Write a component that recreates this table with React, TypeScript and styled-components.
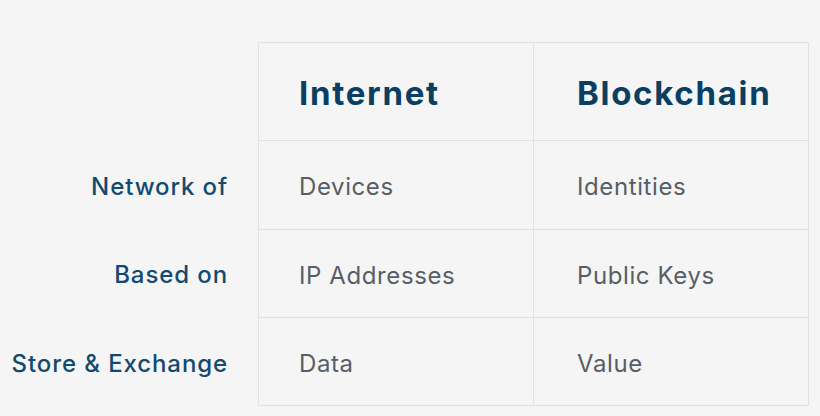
import React from "react"
import styled, { createGlobalStyle } from "styled-components"

const rows = [
  { label: "Network of", internet: "Devices", blockchain: "Identities" },
  { label: "Based on", internet: "IP Addresses", blockchain: "Public Keys" },
  { label: "Store & Exchange", internet: "Data", blockchain: "Value" },
]

const GlobalStyle = createGlobalStyle`
  html, body {
    margin: 0;
    padding: 0;
    background: #f5f5f5;
  }
  body {
    font-family: Inter, "Open Sans", sans-serif;
  }
`

const App = () => {
  return (
    <Page>
      <GlobalStyle />
      <Table>
        <Label />
        <Cell $col={0}>
          <Heading>Internet</Heading>
        </Cell>
        <Cell $col={1}>
          <Heading>Blockchain</Heading>
        </Cell>
        {rows.map((row, i) => (
          <React.Fragment key={row.label}>
            <Label>{row.label}</Label>
            <Cell $col={0} $last={i === rows.length - 1}>
              <Value>{row.internet}</Value>
            </Cell>
            <Cell $col={1} $last={i === rows.length - 1}>
              <Value>{row.blockchain}</Value>
            </Cell>
          </React.Fragment>
        ))}
      </Table>
    </Page>
  )
}

const Page = styled.div`
  width: 820px;
  height: 416px;
  padding-top: 42px;
  box-sizing: border-box;
  background: #f5f5f5;
  overflow: hidden;
`

const Table = styled.div`
  display: grid;
  grid-template-columns: 258px 275px 276px;
  grid-template-rows: 98px 89px 88px 89px;
`

const Label = styled.div`
  display: flex;
  align-items: center;
  justify-content: flex-end;
  padding: 3px 30px 0 0;
  font-size: 24px;
  font-weight: 500;
  letter-spacing: 0.9px;
  color: #124a70;
  white-space: nowrap;
`

const Cell = styled.div<{ $col: number; $last?: boolean }>`
  display: flex;
  align-items: center;
  box-sizing: border-box;
  padding: 3px 0 0 ${p => (p.$col === 0 ? 40 : 43)}px;
  border-left: 1px solid #e1e1e1;
  border-top: 1px solid #e1e1e1;
  border-right: ${p => (p.$col === 1 ? "1px solid #e1e1e1" : "none")};
  border-bottom: ${p => (p.$last ? "1px solid #e1e1e1" : "none")};
`

const Heading = styled.div`
  font-size: 33px;
  font-weight: 700;
  letter-spacing: 1.7px;
  color: #0a3e62;
`

const Value = styled.div`
  font-size: 24px;
  font-weight: 400;
  letter-spacing: 0.6px;
  color: #585e65;
`

export default App
